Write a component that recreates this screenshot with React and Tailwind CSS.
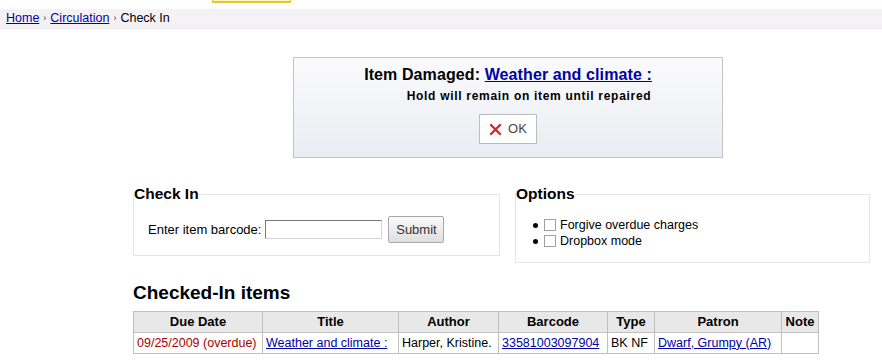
import React from "react";

const font = { fontFamily: '"Liberation Sans", Arial, sans-serif' };

function XIcon() {
  return (
    <svg width="13" height="13" viewBox="0 0 13 13">
      <path d="M2 2 L11 11 M11 2 L2 11" stroke="#d8252a" strokeWidth="2.4" strokeLinecap="round" />
    </svg>
  );
}

export default function App() {
  return (
    <div className="w-[882px] h-[363px] bg-white overflow-hidden text-black" style={font}>
      <div className="h-[9px]">
        <div className="ml-[212px] w-[79px] h-[3px] bg-[#fff6c0] border-x border-b-2 border-[#e9c23c]" />
      </div>
      <div className="h-[20px] bg-[#f5f2f5] border-b border-[#ede8ee] flex items-center pl-[6px] text-[12.5px]">
        <a className="text-[#0000aa] underline">Home</a>
        <span className="text-[9px] mx-[4px] text-[#333]">›</span>
        <a className="text-[#0000aa] underline">Circulation</a>
        <span className="text-[9px] mx-[4px] text-[#333]">›</span>
        <span>Check In</span>
      </div>

      <div className="ml-[293px] mt-[28px] w-[430px] h-[101px] border border-[#c4c4c4] bg-gradient-to-b from-[#fbfbfd] to-[#eaecf2] flex flex-col items-center">
        <div className="mt-[7px] text-[16px] font-bold leading-[20px] tracking-[0.1px]">
          Item Damaged: <a className="text-[#0000aa] underline">Weather and climate :</a>
        </div>
        <div className="ml-[42px] mt-[3px] text-[12px] font-bold leading-[16px] tracking-[0.7px]">Hold will remain on item until repaired</div>
        <button className="mt-[10px] w-[58px] h-[30px] bg-white border border-[#bcbcbc] flex items-center justify-center gap-[6px] text-[13px] text-[#444]">
          <XIcon />
          <span>OK</span>
        </button>
      </div>

      <div className="ml-[133px] mt-[27px] flex gap-[15px] items-start">
        <fieldset className="w-[367px] h-[71px] border border-[#e6e6e6] m-0 p-0">
          <legend className="p-0 text-[15.5px] font-bold leading-[18px]">Check In</legend>
          <div className="flex items-center pl-[14px] mt-[13px] text-[13px]">
            <span>Enter item barcode:</span>
            <input className="ml-[4px] w-[117px] h-[19px] border border-t-[#7a7a7a] border-l-[#7a7a7a] border-b-[#d4d4d4] border-r-[#d4d4d4] bg-white" />
            <button className="ml-[6px] w-[56px] h-[27px] border border-[#a8a8a8] rounded-[2px] bg-gradient-to-b from-[#fbfbfb] to-[#dedede] text-[13px] text-[#333]">Submit</button>
          </div>
        </fieldset>
        <fieldset className="w-[355px] h-[78px] border border-[#e6e6e6] m-0 p-0">
          <legend className="p-0 text-[15.5px] font-bold leading-[18px]">Options</legend>
          <ul className="mt-[14px] pl-[17px] text-[12.5px] leading-[16px]">
            <li className="flex items-center">
              <span className="w-[5px] h-[5px] rounded-full bg-black mr-[6px]" />
              <span className="w-[12px] h-[12px] border border-[#a0a0a0] bg-white mr-[4px]" />
              Forgive overdue charges
            </li>
            <li className="flex items-center">
              <span className="w-[5px] h-[5px] rounded-full bg-black mr-[6px]" />
              <span className="w-[12px] h-[12px] border border-[#a0a0a0] bg-white mr-[4px]" />
              Dropbox mode
            </li>
          </ul>
        </fieldset>
      </div>

      <h2 className="ml-[133px] mt-[19px] text-[19px] font-bold leading-[22px]">Checked-In items</h2>
      <table className="ml-[133px] mt-[7px] border-collapse table-fixed w-[685px] text-[12.5px]">
        <colgroup>
          <col className="w-[129px]" />
          <col className="w-[136px]" />
          <col className="w-[100px]" />
          <col className="w-[109px]" />
          <col className="w-[47px]" />
          <col className="w-[127px]" />
          <col className="w-[37px]" />
        </colgroup>
        <thead>
          <tr className="bg-[#e8e8e8] h-[21px]">
            {["Due Date", "Title", "Author", "Barcode", "Type", "Patron", "Note"].map((h) => (
              <th key={h} className="border border-[#c0c0c0] font-bold text-[13px] text-center px-[3px] whitespace-nowrap">{h}</th>
            ))}
          </tr>
        </thead>
        <tbody>
          <tr className="h-[21px]">
            <td className="border border-[#c0c0c0] px-[3px] text-[#aa0000] whitespace-nowrap">09/25/2009 (overdue)</td>
            <td className="border border-[#c0c0c0] px-[3px] whitespace-nowrap"><a className="text-[#0000aa] underline">Weather and climate :</a></td>
            <td className="border border-[#c0c0c0] px-[3px] whitespace-nowrap">Harper, Kristine.</td>
            <td className="border border-[#c0c0c0] px-[3px] whitespace-nowrap"><a className="text-[#0000aa] underline">33581003097904</a></td>
            <td className="border border-[#c0c0c0] px-[3px] whitespace-nowrap">BK NF</td>
            <td className="border border-[#c0c0c0] px-[3px] whitespace-nowrap"><a className="text-[#0000aa] underline">Dwarf, Grumpy (AR)</a></td>
            <td className="border border-[#c0c0c0] px-[3px]"></td>
          </tr>
        </tbody>
      </table>
    </div>
  );
}
